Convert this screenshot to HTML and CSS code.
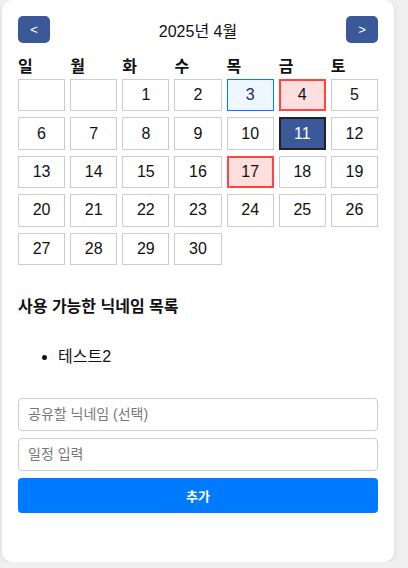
FILE: index.html
```html
<!DOCTYPE html>
<html lang="ko">
<head>
    <meta charset="UTF-8">
    <meta name="viewport" content="width=device-width, initial-scale=1.0">
    <title>일정 달력</title>
    <link rel="stylesheet" href="styles.css">
</head>
<body>
    <div class="container">
        <!-- Calendar header -->
        <div class="cal-header">
            <button class="nav-btn">&lt;</button>
            <span class="cal-title">2025년 4월</span>
            <button class="nav-btn">&gt;</button>
        </div>

        <div class="weekdays">
            <div>일</div>
            <div>월</div>
            <div>화</div>
            <div>수</div>
            <div>목</div>
            <div>금</div>
            <div>토</div>
        </div>

        <div class="days">
            <div class="day empty"></div>
            <div class="day empty"></div>
            <div class="day">1</div>
            <div class="day">2</div>
            <div class="day today">3</div>
            <div class="day has-event">4</div>
            <div class="day">5</div>
            <div class="day">6</div>
            <div class="day">7</div>
            <div class="day">8</div>
            <div class="day">9</div>
            <div class="day">10</div>
            <div class="day selected">11</div>
            <div class="day">12</div>
            <div class="day">13</div>
            <div class="day">14</div>
            <div class="day">15</div>
            <div class="day">16</div>
            <div class="day has-event">17</div>
            <div class="day">18</div>
            <div class="day">19</div>
            <div class="day">20</div>
            <div class="day">21</div>
            <div class="day">22</div>
            <div class="day">23</div>
            <div class="day">24</div>
            <div class="day">25</div>
            <div class="day">26</div>
            <div class="day">27</div>
            <div class="day">28</div>
            <div class="day">29</div>
            <div class="day">30</div>
        </div>

        <!-- Nickname list -->
        <h3>사용 가능한 닉네임 목록</h3>
        <ul class="nick-list">
            <li>테스트2</li>
        </ul>

        <!-- Add schedule -->
        <div class="form">
            <input type="text" placeholder="공유할 닉네임 (선택)">
            <input type="text" placeholder="일정 입력">
            <button class="btn">추가</button>
        </div>
    </div>
</body>
</html>
```

FILE: styles.css
```css
body {
    font-family: "Liberation Sans", Arial, "Noto Sans CJK KR", sans-serif;
    margin: 0;
    padding: 0;
    background-color: #f0f0f0;
}
.container {
    width: 392px;
    box-sizing: border-box;
    margin-left: 2px;
    height: 562px;
    background: white;
    padding: 16px;
    border-radius: 10px;
    box-shadow: 0 2px 6px rgba(0, 0, 0, 0.1);
}
.cal-header {
    display: flex;
    justify-content: space-between;
    align-items: center;
    height: 27px;
    margin-bottom: 14px;
}
.cal-title {
    font-size: 16px;
    color: #111;
}
.nav-btn {
    width: 32px;
    height: 27px;
    padding: 0;
    background-color: #3b5998;
    color: white;
    border: none;
    border-radius: 5px;
    font-family: "Liberation Sans", Arial, sans-serif;
    font-size: 13px;
}
.weekdays {
    display: grid;
    grid-template-columns: repeat(7, 1fr);
    column-gap: 5px;
    font-weight: bold;
    font-size: 16px;
    line-height: 20px;
    color: #111;
    margin-bottom: 2px;
}
.days {
    display: grid;
    grid-template-columns: repeat(7, 1fr);
    column-gap: 5px;
    row-gap: 6px;
}
.day {
    height: 32.4px;
    box-sizing: border-box;
    border: 1px solid #ccc;
    display: flex;
    justify-content: center;
    align-items: center;
    font-size: 16px;
    color: #111;
}
.day.today {
    border-color: #007bff;
    background-color: #eef6ff;
    color: #1a2a6a;
}
.day.has-event {
    border: 2px solid #f44;
    background-color: #ffdede;
}
.day.selected {
    border: 2px solid #222;
    background-color: #3b5998;
    color: white;
}
h3 {
    font-size: 16px;
    margin: 28px 0 0;
    color: #111;
}
.nick-list {
    margin: 26px 0 0;
    padding-left: 40px;
    font-size: 16px;
    color: #111;
}
.form {
    margin-top: 31px;
}
.form input {
    display: block;
    width: 100%;
    box-sizing: border-box;
    height: 33px;
    padding: 0 9px;
    margin-bottom: 7px;
    border: 1px solid #ccc;
    border-radius: 4px;
    font-family: "Liberation Sans", Arial, "Noto Sans CJK KR", sans-serif;
    font-size: 14px;
}
.form input::placeholder {
    color: #777;
}
.btn {
    width: 100%;
    height: 35px;
    background-color: #007bff;
    color: white;
    border: none;
    border-radius: 4px;
    font-family: "Liberation Sans", Arial, "Noto Sans CJK KR", sans-serif;
    font-weight: bold;
    font-size: 13px;
}
```
